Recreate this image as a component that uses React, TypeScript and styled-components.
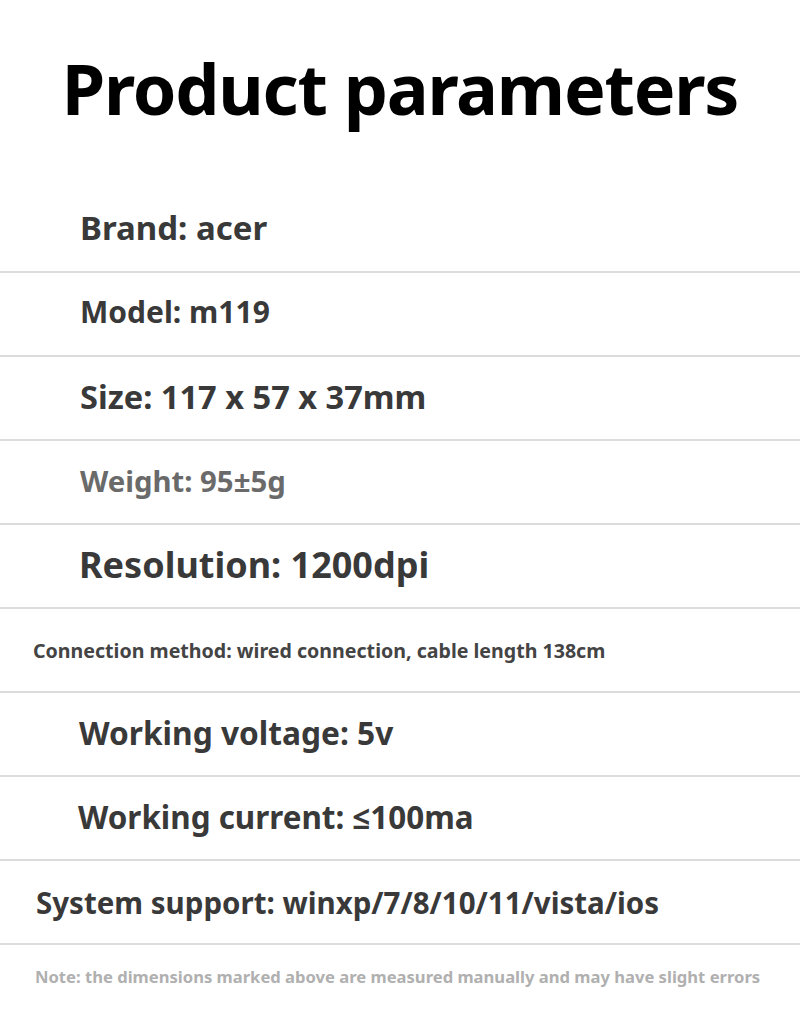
import React from "react";
import styled, { createGlobalStyle } from "styled-components";

const GlobalStyle = createGlobalStyle`
  html, body {
    margin: 0;
    padding: 0;
    background: #ffffff;
  }
  body {
    font-family: "Noto Sans", "Open Sans", sans-serif;
  }
`;

interface ParamRow {
  text: string;
  size: number;
  indent: number;
  color?: string;
  lift?: number;
}

const rows: ParamRow[] = [
  { text: "Brand: acer", size: 33, indent: 80, lift: 6 },
  { text: "Model: m119", size: 30, indent: 80, lift: 6 },
  { text: "Size: 117 x 57 x 37mm", size: 32.6, indent: 80, lift: 4 },
  { text: "Weight: 95±5g", size: 29.3, indent: 80, color: "#6a6a6a", lift: 2 },
  { text: "Resolution: 1200dpi", size: 36, indent: 79, lift: 4 },
  { text: "Connection method: wired connection, cable length 138cm", size: 19.6, indent: 33, color: "#444444" },
  { text: "Working voltage: 5v", size: 31.7, indent: 79, lift: 4 },
  { text: "Working current: ≤100ma", size: 31.4, indent: 78, lift: 4 },
  { text: "System support: winxp/7/8/10/11/vista/ios", size: 29.5, indent: 36, lift: 0 },
];

const Page = styled.div`
  width: 800px;
  height: 1016px;
  background: #ffffff;
  overflow: hidden;
`;

const Header = styled.header`
  height: 189px;
  box-sizing: border-box;
  padding-bottom: 14px;
  display: flex;
  align-items: center;
  justify-content: center;
`;

const Title = styled.h1`
  margin: 0;
  font-family: "Noto Sans", sans-serif;
  font-weight: 700;
  font-size: 70px;
  color: #000000;
  letter-spacing: -1.2px;
  line-height: 1;
`;

const Row = styled.div<{ $indent: number; $lift: number }>`
  height: 82px;
  box-sizing: content-box;
  display: flex;
  align-items: center;
  padding-left: ${(p) => p.$indent}px;
  border-bottom: 2px solid #dcdcdc;

  & > span {
    margin-bottom: ${(p) => p.$lift}px;
  }
`;

const RowText = styled.span<{ $size: number; $color: string }>`
  font-size: ${(p) => p.$size}px;
  font-weight: 700;
  color: ${(p) => p.$color};
  white-space: nowrap;
`;

const Note = styled.p`
  margin: 0;
  padding: 20px 0 0 35px;
  font-size: 16.6px;
  font-weight: 700;
  color: #b0b0b0;
  white-space: nowrap;
`;

export default function App() {
  return (
    <Page>
      <GlobalStyle />
      <Header>
        <Title>Product parameters</Title>
      </Header>
      {rows.map((r) => (
        <Row key={r.text} $indent={r.indent} $lift={r.lift ?? 0}>
          <RowText $size={r.size} $color={r.color ?? "#393939"}>
            {r.text}
          </RowText>
        </Row>
      ))}
      <Note>Note: the dimensions marked above are measured manually and may have slight errors</Note>
    </Page>
  );
}
